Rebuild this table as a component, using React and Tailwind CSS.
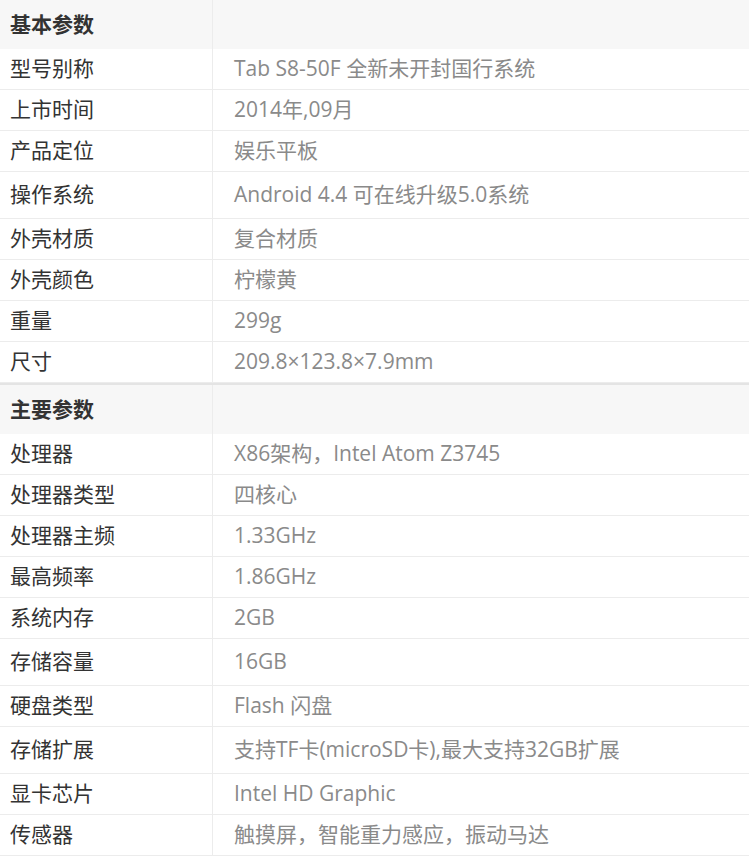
import React from 'react';

const sections = [
  {
    title: '基本参数',
    rows: [
      ['型号别称', 'Tab S8-50F 全新未开封国行系统', 'h-[41px]'],
      ['上市时间', '2014年,09月', 'h-[41px]'],
      ['产品定位', '娱乐平板', 'h-[41px]'],
      ['操作系统', 'Android 4.4 可在线升级5.0系统', 'h-[47px]'],
      ['外壳材质', '复合材质', 'h-[41px]'],
      ['外壳颜色', '柠檬黄', 'h-[41px]'],
      ['重量', '299g', 'h-[41px]'],
      ['尺寸', '209.8×123.8×7.9mm', 'h-[41px]'],
    ],
  },
  {
    title: '主要参数',
    rows: [
      ['处理器', 'X86架构，Intel Atom Z3745', 'h-[41px]'],
      ['处理器类型', '四核心', 'h-[41px]'],
      ['处理器主频', '1.33GHz', 'h-[41px]'],
      ['最高频率', '1.86GHz', 'h-[41px]'],
      ['系统内存', '2GB', 'h-[41px]'],
      ['存储容量', '16GB', 'h-[47px]'],
      ['硬盘类型', 'Flash 闪盘', 'h-[41px]'],
      ['存储扩展', '支持TF卡(microSD卡),最大支持32GB扩展', 'h-[47px]'],
      ['显卡芯片', 'Intel HD Graphic', 'h-[41px]'],
      ['传感器', '触摸屏，智能重力感应，振动马达', 'h-[41px]'],
    ],
  },
];

const SectionHeader = ({ title, first }) => (
  <div
    className={
      'flex bg-[#f7f7f7] ' +
      (first ? 'h-[49px]' : 'h-[51px] border-t-2 border-[#e4e4e4]')
    }>
    <div className="w-[213px] shrink-0 border-r border-[#ececec] flex items-center pl-[10px] text-[21px] font-bold text-[#333]">
      {title}
    </div>
    <div className="flex-1" />
  </div>
);

const Row = ({ label, value, height }) => (
  <div className={'flex border-b border-[#ececec] bg-white ' + height}>
    <div className="w-[213px] shrink-0 border-r border-[#ececec] flex items-center pl-[10px] text-[21px] text-[#333]">
      {label}
    </div>
    <div className="flex-1 flex items-center pl-[21px] text-[21px] text-[#8a8a8a] whitespace-nowrap">
      {value}
    </div>
  </div>
);

export default function App() {
  return (
    <div
      className="w-[749px] h-[858px] overflow-hidden bg-white"
      style={{ fontFamily: '"Open Sans", "Noto Sans CJK SC", sans-serif' }}>
      {sections.map((section, i) => (
        <div key={section.title}>
          <SectionHeader title={section.title} first={i === 0} />
          {section.rows.map(([label, value, height]) => (
            <Row key={label} label={label} value={value} height={height} />
          ))}
        </div>
      ))}
    </div>
  );
}
